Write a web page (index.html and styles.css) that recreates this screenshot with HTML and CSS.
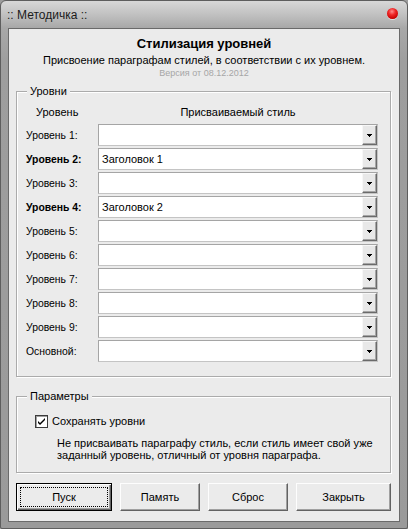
FILE: index.html
```html
<!DOCTYPE html>
<html>
<head>
<meta charset="utf-8">
<link rel="stylesheet" href="styles.css">
</head>
<body>
<div class="window">
  <div class="titlebar">
    <span class="title">:: Методичка ::</span>
    <span class="close"></span>
  </div>
  <div class="client">
    <div class="header">
      <div class="h1">Стилизация уровней</div>
      <div class="sub">Присвоение параграфам стилей, в соответствии с их уровнем.</div>
      <div class="ver">Версия от 08.12.2012</div>
    </div>

    <fieldset class="group levels">
      <legend>Уровни</legend>
      <div class="cols"><span class="col-l">Уровень</span><span class="col-r">Присваиваемый стиль</span></div>
      <div class="rows">
        <div class="row"><span class="lbl">Уровень 1:</span><div class="combo"><span class="val"></span><span class="drop"><svg width="5" height="3" viewBox="0 0 5 3"><rect x="0" y="0" width="5" height="1"/><rect x="1" y="1" width="3" height="1"/><rect x="2" y="2" width="1" height="1"/></svg></span></div></div>
        <div class="row"><span class="lbl b">Уровень 2:</span><div class="combo"><span class="val">Заголовок 1</span><span class="drop"><svg width="5" height="3" viewBox="0 0 5 3"><rect x="0" y="0" width="5" height="1"/><rect x="1" y="1" width="3" height="1"/><rect x="2" y="2" width="1" height="1"/></svg></span></div></div>
        <div class="row"><span class="lbl">Уровень 3:</span><div class="combo"><span class="val"></span><span class="drop"><svg width="5" height="3" viewBox="0 0 5 3"><rect x="0" y="0" width="5" height="1"/><rect x="1" y="1" width="3" height="1"/><rect x="2" y="2" width="1" height="1"/></svg></span></div></div>
        <div class="row"><span class="lbl b">Уровень 4:</span><div class="combo"><span class="val">Заголовок 2</span><span class="drop"><svg width="5" height="3" viewBox="0 0 5 3"><rect x="0" y="0" width="5" height="1"/><rect x="1" y="1" width="3" height="1"/><rect x="2" y="2" width="1" height="1"/></svg></span></div></div>
        <div class="row"><span class="lbl">Уровень 5:</span><div class="combo"><span class="val"></span><span class="drop"><svg width="5" height="3" viewBox="0 0 5 3"><rect x="0" y="0" width="5" height="1"/><rect x="1" y="1" width="3" height="1"/><rect x="2" y="2" width="1" height="1"/></svg></span></div></div>
        <div class="row"><span class="lbl">Уровень 6:</span><div class="combo"><span class="val"></span><span class="drop"><svg width="5" height="3" viewBox="0 0 5 3"><rect x="0" y="0" width="5" height="1"/><rect x="1" y="1" width="3" height="1"/><rect x="2" y="2" width="1" height="1"/></svg></span></div></div>
        <div class="row"><span class="lbl">Уровень 7:</span><div class="combo"><span class="val"></span><span class="drop"><svg width="5" height="3" viewBox="0 0 5 3"><rect x="0" y="0" width="5" height="1"/><rect x="1" y="1" width="3" height="1"/><rect x="2" y="2" width="1" height="1"/></svg></span></div></div>
        <div class="row"><span class="lbl">Уровень 8:</span><div class="combo"><span class="val"></span><span class="drop"><svg width="5" height="3" viewBox="0 0 5 3"><rect x="0" y="0" width="5" height="1"/><rect x="1" y="1" width="3" height="1"/><rect x="2" y="2" width="1" height="1"/></svg></span></div></div>
        <div class="row"><span class="lbl">Уровень 9:</span><div class="combo"><span class="val"></span><span class="drop"><svg width="5" height="3" viewBox="0 0 5 3"><rect x="0" y="0" width="5" height="1"/><rect x="1" y="1" width="3" height="1"/><rect x="2" y="2" width="1" height="1"/></svg></span></div></div>
        <div class="row"><span class="lbl">Основной:</span><div class="combo"><span class="val"></span><span class="drop"><svg width="5" height="3" viewBox="0 0 5 3"><rect x="0" y="0" width="5" height="1"/><rect x="1" y="1" width="3" height="1"/><rect x="2" y="2" width="1" height="1"/></svg></span></div></div>
      </div>
    </fieldset>

    <fieldset class="group params">
      <legend>Параметры</legend>
      <div class="param">
        <span class="check"><svg width="11" height="11" viewBox="0 0 11 11"><path d="M2 5 L4 7 L9 2 L9 4 L4 9 L2 7 Z" fill="#000"/></svg></span>
        <span>Сохранять уровни</span>
      </div>
      <div class="desc">Не присваивать параграфу стиль, если стиль имеет свой уже<br>заданный уровень, отличный от уровня параграфа.</div>
    </fieldset>

    <div class="buttons">
      <div class="button default"><span class="focus">Пуск</span></div>
      <div class="button">Память</div>
      <div class="button">Сброс</div>
      <div class="button">Закрыть</div>
    </div>
  </div>
</div>
</body>
</html>
```

FILE: styles.css
```css
html, body {
  margin: 0;
  padding: 0;
  background: #9c9c9c;
}
body {
  font-family: "Liberation Sans", Arial, sans-serif;
  font-size: 11px;
  color: #000;
}
.window {
  width: 408px;
  height: 529px;
  box-sizing: border-box;
  display: flex;
  flex-direction: column;
  background: linear-gradient(#d8d8d8 0, #c0c0c0 14px, #a8a8a8 27px, #9e9e9e 60px, #9a9a9a 100%);
  border: 1px solid #5e5e5e;
  border-radius: 6px 6px 2px 2px;
  padding: 0 7px 6px 7px;
}
.titlebar {
  height: 27px;
  margin: 0 -7px;
  padding: 0 9px 0 6px;
  display: flex;
  align-items: center;
  justify-content: space-between;
  flex-shrink: 0;
}
.title {
  font-size: 12px;
  color: #1b1b1b;
}
.close {
  width: 11px;
  height: 11px;
  border-radius: 50%;
  margin-bottom: 2px;
  background: radial-gradient(circle at 45% 32%, #ff8c8c 0, #f02a2a 35%, #c80000 75%, #8e0000 100%);
  box-shadow: 0 1px 0 rgba(255,255,255,0.55);
}
.client {
  flex: 1;
  background: #ebebeb;
  border: 1px solid #6a6a6a;
  display: flex;
  flex-direction: column;
}
.header {
  text-align: center;
  padding-top: 6px;
}
.h1 {
  font-weight: bold;
  font-size: 13px;
  line-height: 17px;
}
.sub {
  line-height: 14px;
  margin-top: 1px;
}
.ver {
  font-size: 9px;
  line-height: 11px;
  margin-top: 1px;
  color: #a6a6a6;
}
.group {
  margin: 5px 8px 0 7px;
  padding: 7px 12px 14px 9px;
  border: 1px solid #ababab;
  box-shadow: 1px 1px 0 #fff, inset 1px 1px 0 #fff;
  min-width: 0;
}
.group legend {
  padding: 0 3px;
  margin-left: 1px;
  line-height: 14px;
  font-size: 11px;
  background: #ebebeb;
}
.params {
  margin-top: 12px;
  padding: 11px 12px 11px 9px;
}
.cols {
  display: grid;
  grid-template-columns: 72px 280px;
  line-height: 14px;
}
.col-l { padding-left: 10px; }
.col-r { text-align: center; }
.rows {
  margin-top: 5px;
  display: flex;
  flex-direction: column;
  gap: 2px;
}
.row {
  display: grid;
  grid-template-columns: 72px 280px;
  align-items: center;
  height: 22px;
}
.lbl { font-size: 10.4px; }
.lbl.b { font-weight: bold; }
.combo {
  height: 22px;
  box-sizing: border-box;
  background: #fff;
  border: 1px solid #a5a5a5;
  border-right-color: #c4c4c4;
  border-bottom-color: #c4c4c4;
  display: flex;
  justify-content: space-between;
}
.val {
  padding-left: 3px;
  line-height: 20px;
  font-size: 11px;
}
.drop {
  width: 15px;
  height: 20px;
  box-sizing: border-box;
  background: #e8e8e8;
  border: 1px solid;
  border-color: #f7f7f7 #6a6a6a #6a6a6a #f7f7f7;
  box-shadow: inset -1px -1px 0 #a6a6a6;
  display: flex;
  align-items: center;
  justify-content: center;
}
.drop svg { display: block; fill: #000; margin: 1px 0 0 0; }
.param {
  display: flex;
  align-items: center;
  gap: 4px;
  margin-left: 9px;
  height: 14px;
}
.check {
  width: 13px;
  height: 13px;
  box-sizing: border-box;
  background: #fff;
  border: 1px solid #3c3c3c;
  box-shadow: inset 1px 1px 0 #a0a0a0;
  display: flex;
  align-items: center;
  justify-content: center;
}
.check svg { display: block; }
.desc {
  margin: 9px 0 0 31px;
  line-height: 12px;
}
.buttons {
  display: grid;
  grid-template-columns: 96px 80px 80px 95px;
  gap: 8px;
  margin: 10px 8px 0 7px;
}
.button {
  height: 28px;
  box-sizing: border-box;
  background: #ebebeb;
  border: 1px solid;
  border-color: #fdfdfd #626262 #626262 #fdfdfd;
  box-shadow: inset -1px -1px 0 #a0a0a0;
  display: flex;
  align-items: center;
  justify-content: center;
}
.button.default {
  border-color: #000;
  box-shadow: inset 1px 1px 0 #fdfdfd, inset -1px -1px 0 #626262, inset -2px -2px 0 #a0a0a0;
  padding: 3px 3px 3px 3px;
}
.focus {
  flex: 1;
  align-self: stretch;
  display: flex;
  align-items: center;
  justify-content: center;
  outline: 1px dotted #000;
  outline-offset: -1px;
}
```
